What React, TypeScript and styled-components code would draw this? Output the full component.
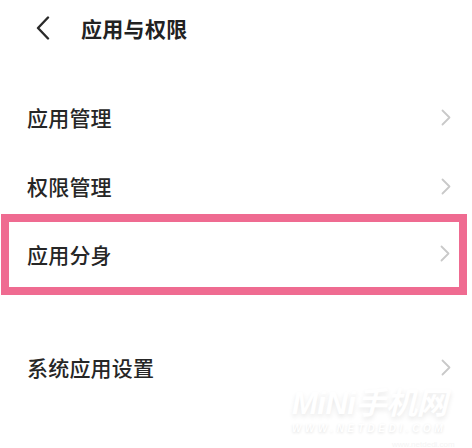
import React from "react";
import styled, { createGlobalStyle } from "styled-components";

const Global = createGlobalStyle`
  html, body { margin: 0; padding: 0; background: #ffffff; }
  body { font-family: "Noto Sans CJK SC", "Noto Sans", sans-serif; }
`;

const Page = styled.div`
  position: relative;
  width: 472px;
  height: 448px;
  overflow: hidden;
  background: #ffffff;
`;

const Header = styled.div`
  height: 56px;
  display: flex;
  align-items: center;
  padding-left: 36px;
  gap: 31px;
`;

const Title = styled.div`
  font-size: 21px;
  font-weight: 700;
  color: #222222;
  letter-spacing: 0.3px;
`;

const List = styled.div`
  display: flex;
  flex-direction: column;
  padding-top: 33px;
`;

const Row = styled.div<{ $gap: number }>`
  height: 56px;
  display: flex;
  align-items: center;
  justify-content: space-between;
  padding: 0 21px 0 27px;
  margin-top: ${(p) => p.$gap}px;
`;

const Highlight = styled.div<{ $gap: number }>`
  box-sizing: border-box;
  margin: ${(p) => p.$gap}px 5px 0 1px;
  height: 81px;
  border: 8px solid #ef6b91;
  display: flex;
  align-items: center;
  justify-content: space-between;
  padding: 0 9px 2px 18px;
`;

const Label = styled.div`
  font-size: 21px;
  font-weight: 500;
  color: #262626;
  letter-spacing: 0.2px;
`;

const Watermark = styled.div`
  position: absolute;
  left: 292px;
  top: 386px;
  display: flex;
  flex-direction: column;
  color: #ffffff;
  font-style: italic;
  font-weight: 700;
  pointer-events: none;
`;

const WmBig = styled.div`
  font-family: "Liberation Sans", "Noto Sans CJK SC", sans-serif;
  font-size: 31px;
  line-height: 36px;
  letter-spacing: -0.5px;
  text-shadow: 0 3px 5px rgba(0, 0, 0, 0.09);
`;

const WmSmall = styled.div`
  font-family: "Liberation Sans", sans-serif;
  font-size: 10px;
  line-height: 13px;
  letter-spacing: 3.6px;
  text-shadow: 0 1px 3px rgba(0, 0, 0, 0.12);
`;

const WmTiny = styled.div`
  font-family: "Liberation Sans", sans-serif;
  font-size: 8px;
  font-style: normal;
  font-weight: 400;
  line-height: 10px;
  margin: 5px 0 0 100px;
  color: #f4f4f4;
`;

const Back = () => (
  <svg width="14" height="24" viewBox="0 0 14 24" fill="none">
    <path d="M12 1.5 L2 12 L12 22.5" stroke="#2a2a2a" strokeWidth="2.4" strokeLinecap="round" strokeLinejoin="round" />
  </svg>
);

const Chevron = () => (
  <svg width="10" height="17" viewBox="0 0 10 17" fill="none">
    <path d="M1.5 1.5 L8.5 8.5 L1.5 15.5" stroke="#c9c9c9" strokeWidth="1.8" strokeLinecap="round" strokeLinejoin="round" />
  </svg>
);

export default function App() {
  return (
    <>
      <Global />
      <Page>
        <Header>
          <Back />
          <Title>应用与权限</Title>
        </Header>
        <List>
          <Row $gap={0}>
            <Label>应用管理</Label>
            <Chevron />
          </Row>
          <Row $gap={13}>
            <Label>权限管理</Label>
            <Chevron />
          </Row>
          <Highlight $gap={0}>
            <Label>应用分身</Label>
            <Chevron />
          </Highlight>
          <Row $gap={44}>
            <Label>系统应用设置</Label>
            <Chevron />
          </Row>
        </List>
        <Watermark>
          <WmBig>MiNi手机网</WmBig>
          <WmSmall>WWW.NETDEDI.COM</WmSmall>
          <WmTiny>www.netdedi.com</WmTiny>
        </Watermark>
      </Page>
    </>
  );
}
